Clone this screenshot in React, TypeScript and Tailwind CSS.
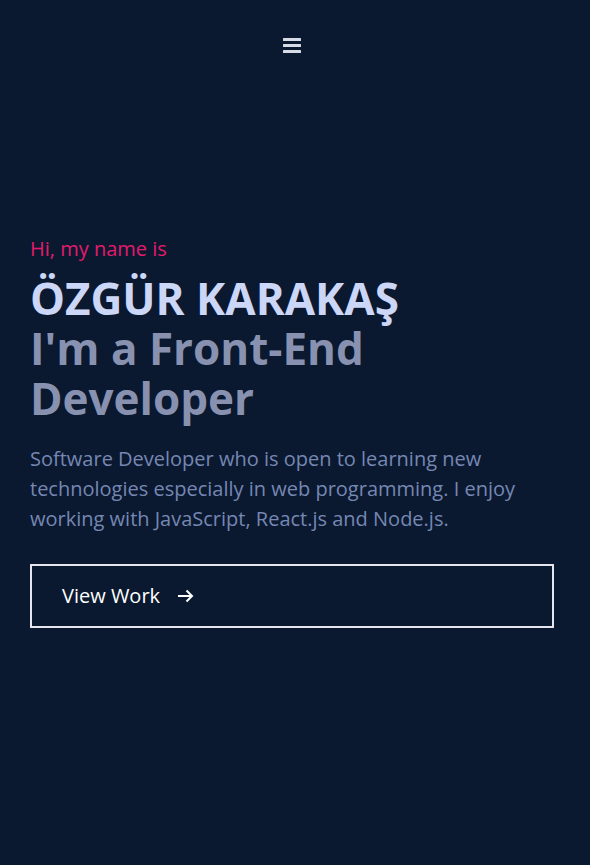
import React from "react";

export default function App() {
  return (
    <div
      className="min-h-[865px] w-full bg-[#0a192f]"
      style={{ fontFamily: '"Open Sans", "Noto Sans", sans-serif' }}
    >
      <header className="flex h-[90px] items-center justify-center pr-[6px]">
        <svg width="18" height="16" viewBox="0 0 18 16" aria-label="menu">
          <rect x="0" y="1" width="18" height="3" rx="0.5" fill="#d6dbe6" />
          <rect x="0" y="7" width="18" height="3" rx="0.5" fill="#d6dbe6" />
          <rect x="0" y="13" width="18" height="3" rx="0.5" fill="#d6dbe6" />
        </svg>
      </header>
      <section className="ml-[30px] w-[524px] pt-[144px]">
        <p className="text-[20px] leading-[30px] text-[#e31b6d]">Hi, my name is</p>
        <h1 className="mt-[9px] text-[44px] font-bold leading-[50px] text-[#ccd6f6]">
          ÖZGÜR KARAKAŞ
        </h1>
        <h2 className="text-[44px] font-bold leading-[50px] text-[#8892b0]">
          I'm a Front-End
          <br />
          Developer
        </h2>
        <p className="mt-[21px] text-[20px] leading-[30px] text-[#7687b3]">
          Software Developer who is open to learning new technologies especially in web programming. I enjoy working with JavaScript, React.js and Node.js.
        </p>
        <button className="mt-[30px] flex h-[64px] w-full items-center border-2 border-[#e6e6ee] pl-[30px] text-[20px] text-white">
          <span>View Work</span>
          <svg className="ml-[17px]" width="17" height="14" viewBox="0 0 17 14" fill="none">
            <path d="M1 7h14M9.5 1.5 15 7l-5.5 5.5" stroke="#ffffff" strokeWidth="2" />
          </svg>
        </button>
      </section>
    </div>
  );
}
